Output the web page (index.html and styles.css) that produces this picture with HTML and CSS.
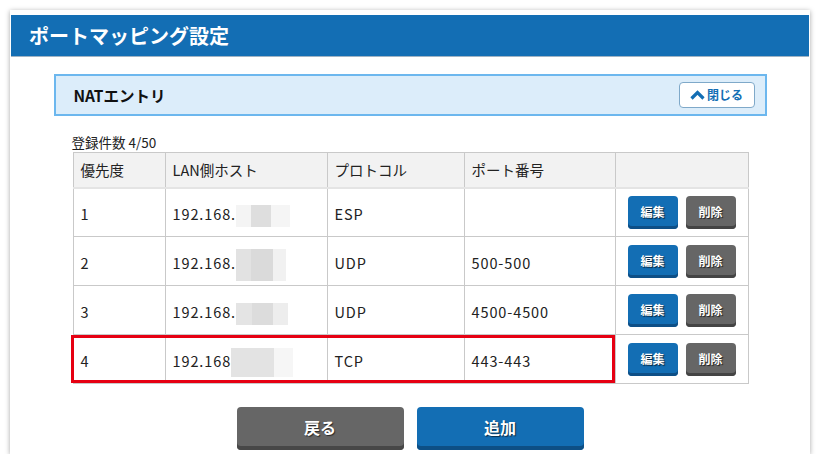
FILE: index.html
```html
<!DOCTYPE html>
<html lang="ja">
<head>
<meta charset="utf-8">
<title>ポートマッピング設定</title>
<link rel="stylesheet" href="styles.css">
</head>
<body>
<div class="window">
  <div class="page-header">ポートマッピング設定</div>
  <div class="content">
    <div class="section-bar">
      <span class="section-title">NATエントリ</span>
      <button class="close-btn"><svg class="chev" width="15" height="10" viewBox="0 0 15 10"><polyline points="1.5,8.5 7.5,2.5 13.5,8.5" fill="none" stroke="#136eb4" stroke-width="3.2"/></svg>閉じる</button>
    </div>
    <div class="table-area">
      <div class="count">登録件数 4/50</div>
      <div class="table-wrap">
        <table class="nat">
          <colgroup>
            <col class="c1"><col class="c2"><col class="c3"><col class="c4"><col class="c5">
          </colgroup>
          <thead>
            <tr><th>優先度</th><th>LAN側ホスト</th><th>プロトコル</th><th>ポート番号</th><th></th></tr>
          </thead>
          <tbody>
            <tr>
              <td class="num">1</td>
              <td class="num">192.168.<span class="blur b1"></span></td>
              <td class="num">ESP</td>
              <td class="num"></td>
              <td class="acts"><button class="btn-s edit">編集</button><button class="btn-s del">削除</button></td>
            </tr>
            <tr>
              <td class="num">2</td>
              <td class="num">192.168.<span class="blur b2"></span></td>
              <td class="num">UDP</td>
              <td class="num">500-500</td>
              <td class="acts"><button class="btn-s edit">編集</button><button class="btn-s del">削除</button></td>
            </tr>
            <tr>
              <td class="num">3</td>
              <td class="num">192.168.<span class="blur b3"></span></td>
              <td class="num">UDP</td>
              <td class="num">4500-4500</td>
              <td class="acts"><button class="btn-s edit">編集</button><button class="btn-s del">削除</button></td>
            </tr>
            <tr>
              <td class="num">4</td>
              <td class="num">192.168<span class="blur b4"></span></td>
              <td class="num">TCP</td>
              <td class="num">443-443</td>
              <td class="acts"><button class="btn-s edit">編集</button><button class="btn-s del">削除</button></td>
            </tr>
          </tbody>
        </table>
        <div class="highlight"></div>
      </div>
    </div>
    <div class="actions">
      <button class="btn-l back">戻る</button>
      <button class="btn-l add">追加</button>
    </div>
  </div>
</div>
</body>
</html>
```

FILE: styles.css
```css
* { box-sizing: border-box; }
html, body { margin: 0; padding: 0; background: #ffffff; }
body {
  font-family: "Noto Sans CJK JP", "Noto Sans", sans-serif;
  color: #222;
  padding: 10px 10px 0 10px;
}
.window {
  width: 800px;
  height: 444px;
  background: #fff;
  box-shadow: 0 1px 5px rgba(0,0,0,0.35);
  padding-top: 5px;
}
.page-header {
  margin: 0 1px;
  height: 42px;
  background: #136eb4;
  color: #fff;
  font-weight: bold;
  font-size: 20px;
  line-height: 41px;
  padding-left: 18px;
  border-bottom: 1px solid #9fb3c4;
}
.content {
  padding-top: 17px;
}
.section-bar {
  width: 713px;
  height: 42px;
  margin: 0 auto;
  background: #dcedfa;
  border: 2px solid #6cb7ee;
  display: flex;
  align-items: center;
  justify-content: space-between;
  padding: 0 10px 0 18px;
}
.section-title {
  font-size: 15.5px;
  font-weight: bold;
  color: #111;
}
.close-btn {
  width: 76px;
  height: 26px;
  background: #fff;
  border: 1px solid #7fa9c9;
  border-radius: 4px;
  color: #136eb4;
  font-family: inherit;
  font-weight: bold;
  font-size: 12px;
  display: flex;
  align-items: center;
  justify-content: center;
  gap: 2px;
  padding: 0 0 1px 0;
}
.chev { display: block; }
.table-area {
  width: 675px;
  margin: 0 auto;
  padding-top: 17px;
}
.count {
  font-size: 13.5px;
  line-height: 19px;
  height: 19px;
  margin-left: -1px;
}
.table-wrap { position: relative; }
table.nat {
  width: 675px;
  border-collapse: collapse;
  table-layout: fixed;
  font-size: 14.5px;
}
col.c1 { width: 92px; }
col.c2 { width: 162px; }
col.c3 { width: 137px; }
col.c4 { width: 151px; }
col.c5 { width: 133px; }
.nat th, .nat td {
  border: 1px solid #c9c9c9;
  text-align: left;
  padding: 0 0 0 7px;
  white-space: nowrap;
  overflow: hidden;
}
.nat th {
  height: 35px;
  background: #f2f2f2;
  font-weight: normal;
  border-bottom: 2px solid #e4e4e4;
}
.nat td { height: 49px; padding-top: 2px; }
.nat td.num { letter-spacing: 0.9px; }
.nat td.acts { padding-left: 12px; padding-top: 0; }
.blur {
  display: inline-block;
  vertical-align: middle;
  margin-top: -12px;
  margin-bottom: -12px;
}
.b1 { width: 54px; height: 22px; background: linear-gradient(90deg, #f4f4f4 0 28%, #dedede 28% 65%, #f5f5f5 65% 100%); }
.b2 { width: 50px; height: 32px; background: linear-gradient(90deg, #e2e2e2 0 30%, #dadada 30% 73%, #f1f1f1 73% 100%); }
.b3 { width: 52px; height: 22px; background: linear-gradient(90deg, #e4e4e4 0 30%, #dcdcdc 30% 72%, #ededed 72% 100%); }
.b4 { width: 62px; height: 29px; background: linear-gradient(90deg, #e3e3e3 0 70%, #f6f6f6 70% 100%); }
.btn-s {
  width: 50px;
  height: 33px;
  border: none;
  border-radius: 4px;
  color: #fff;
  font-family: inherit;
  font-weight: bold;
  font-size: 12px;
  text-shadow: 1px 1px 1px rgba(0,0,0,0.7);
  padding: 0 0 2px 0;
  vertical-align: middle;
}
.btn-s + .btn-s { margin-left: 8px; }
.edit { background: #136eb4; box-shadow: inset 0 -3px 0 #0e4f86; }
.del { background: #666; box-shadow: inset 0 -3px 0 #444; }
.highlight {
  position: absolute;
  left: -2px;
  top: 183px;
  width: 544px;
  height: 48px;
  border: 3px solid #e60012;
  pointer-events: none;
}
.actions {
  display: flex;
  justify-content: center;
  gap: 13px;
  padding-top: 23px;
}
.btn-l {
  width: 167px;
  height: 43px;
  border: none;
  border-radius: 4px;
  color: #fff;
  font-family: inherit;
  font-weight: bold;
  font-size: 16px;
  text-shadow: 1px 1px 1px rgba(0,0,0,0.6);
  padding: 0 0 4px 0;
}
.back { background: #666; box-shadow: inset 0 -4px 0 #474747; }
.add { background: #136eb4; box-shadow: inset 0 -4px 0 #0d4f85; }
```
